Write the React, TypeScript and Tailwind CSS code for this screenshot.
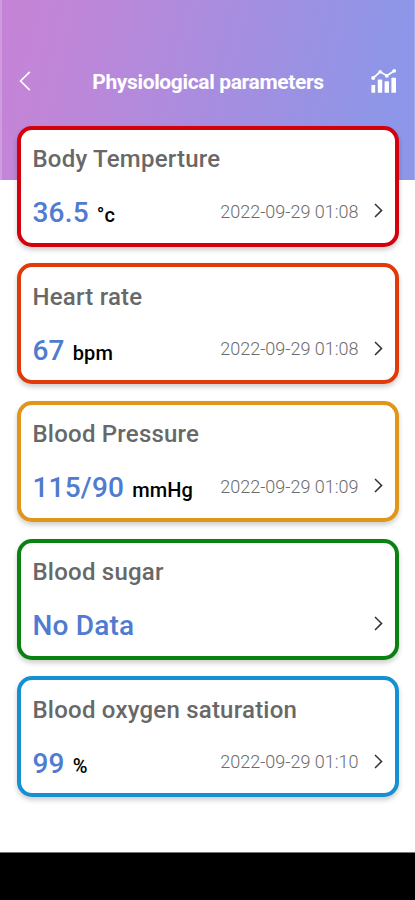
import clsx from 'clsx';

interface Reading {
  title: string;
  value: string;
  unit?: string;
  date?: string;
  border: string;
}

const READINGS: Reading[] = [
  { title: 'Body Temperture', value: '36.5', unit: '°c', date: '2022-09-29 01:08', border: 'border-[#d4000c]' },
  { title: 'Heart rate', value: '67', unit: 'bpm', date: '2022-09-29 01:08', border: 'border-[#e03a0a]' },
  { title: 'Blood Pressure', value: '115/90', unit: 'mmHg', date: '2022-09-29 01:09', border: 'border-[#e0961a]' },
  { title: 'Blood sugar', value: 'No Data', border: 'border-[#0a8212]' },
  { title: 'Blood oxygen saturation', value: '99', unit: '%', date: '2022-09-29 01:10', border: 'border-[#1590d2]' },
];

function BackIcon() {
  return (
    <svg width="12" height="20" viewBox="0 0 12 20" fill="none" stroke="currentColor" strokeWidth="1.7">
      <path d="M10.8 0.8 1.6 10l9.2 9.2" />
    </svg>
  );
}

function ChartIcon() {
  return (
    <svg width="26" height="26" viewBox="0 0 26 26" fill="currentColor">
      <rect x="0.4" y="17" width="3.8" height="7.8" rx="0.6" />
      <rect x="6.8" y="11.5" width="4.4" height="13.3" rx="0.6" />
      <rect x="13.6" y="13.2" width="4.4" height="11.6" rx="0.6" />
      <rect x="20.4" y="9.8" width="4.6" height="15" rx="0.6" />
      <path d="M2.2 10 9.2 3.8l6.6 4 7.6-5" fill="none" stroke="currentColor" strokeWidth="1.7" />
      <circle cx="2.2" cy="10" r="2" />
      <circle cx="9.2" cy="3.8" r="1.8" />
      <circle cx="15.8" cy="7.8" r="1.9" />
      <circle cx="23.2" cy="2.8" r="1.9" />
    </svg>
  );
}

function ChevronIcon() {
  return (
    <svg width="9" height="15" viewBox="0 0 9 15" fill="none" stroke="currentColor" strokeWidth="1.5">
      <path d="M1 1l6.6 6.4L1 14" />
    </svg>
  );
}

function ReadingCard({ title, value, unit, date, border }: Reading) {
  return (
    <button
      type="button"
      className={clsx(
        'flex h-[121px] w-full flex-col rounded-[15px] border-4 bg-white px-[12px] text-left shadow-[0_3px_5px_rgba(0,0,0,0.2)]',
        border
      )}
    >
      <h2 className="mt-[15.5px] text-[24px] font-medium leading-[28px] tracking-[0.22px] text-[#686868]">{title}</h2>
      <div className="mt-[24px] flex h-[32px] w-full items-start">
        <p className="flex items-baseline leading-[32px]">
          <span className="text-[28px] font-medium tracking-[0.2px] text-[#4f7bd0]">{value}</span>
          {unit && <span className="ml-[8px] text-[20px] font-medium tracking-[0.1px] text-black">{unit}</span>}
        </p>
        {date && <span className="-mt-[1.5px] ml-auto text-[18px] font-light leading-[32px] text-[#6c6c6c]">{date}</span>}
        <span className={clsx('mt-[6px] text-[#333333]', date ? 'ml-[15px]' : 'ml-auto')}>
          <ChevronIcon />
        </span>
      </div>
    </button>
  );
}

export default function App() {
  return (
    <div className="flex h-[900px] w-[415px] flex-col overflow-hidden bg-white font-['Roboto',sans-serif]">
      <header className="h-[180px] shrink-0 border-l-2 border-r border-white/20 bg-[linear-gradient(103deg,#c583d6_0%,#c186d8_15%,#a78ddf_52%,#8d96e8_90%)] bg-origin-border pt-[61px]">
        <div className="flex h-[40px] items-center justify-between pl-[17px] pr-[17px] text-white">
          <BackIcon />
          <h1 className="ml-[14px] mt-[3px] text-[21px] font-bold tracking-[-0.36px]">Physiological parameters</h1>
          <ChartIcon />
        </div>
      </header>
      <main className="relative -mt-[54.5px] flex flex-1 flex-col gap-[16.7px] px-[16.5px]">
        {READINGS.map((reading) => (
          <ReadingCard key={reading.title} {...reading} />
        ))}
      </main>
      <footer className="h-[48px] shrink-0 border-t border-[#777777] bg-black" />
    </div>
  );
}
